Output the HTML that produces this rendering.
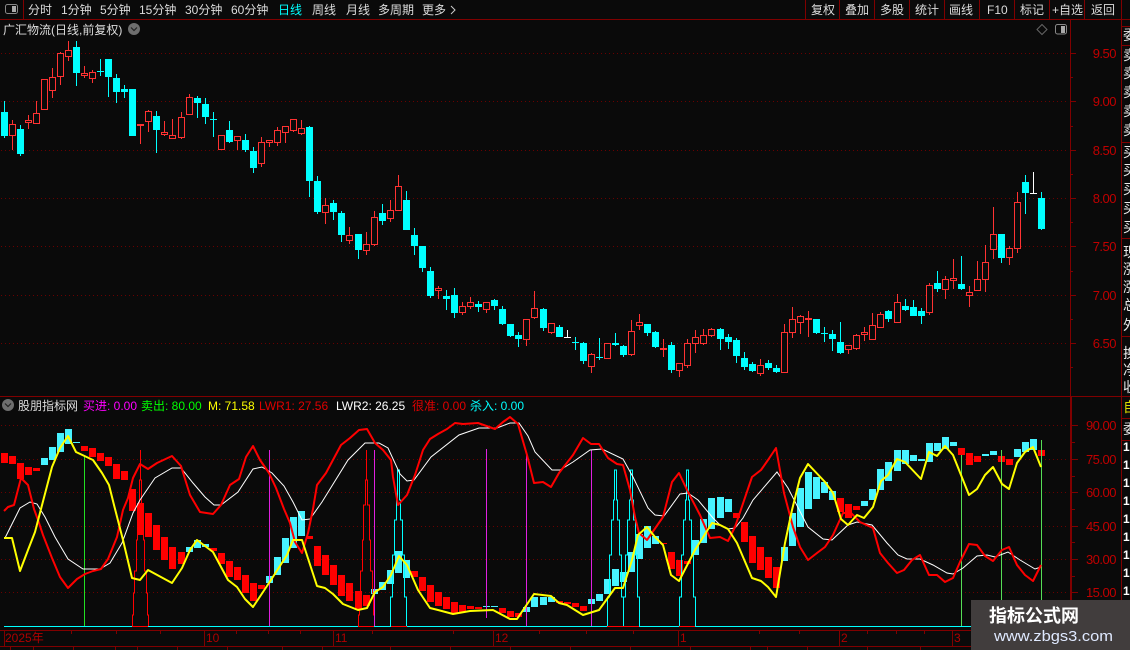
<!DOCTYPE html>
<html><head><meta charset="utf-8"><title>广汇物流</title>
<style>
html,body{margin:0;padding:0;width:1130px;height:650px;overflow:hidden;background:#0a0a0a}
svg{display:block;position:absolute;left:0;top:0}
text{font-family:"Liberation Sans","WenQuanYi Zen Hei","Noto Sans CJK SC",sans-serif;font-size:12px}
.ax text{font-size:13px;letter-spacing:-.5px}
.st text{font-size:14px}
</style></head><body>
<svg width="1130" height="650" viewBox="0 0 1130 650" xmlns="http://www.w3.org/2000/svg">
<defs>
<path id="sr" d="M-8 626V615H-7V593H-6V571H-4V540H-3V505H-1V480H0V450H0V480H1V505H3V540H4V571H6V593H7V615H8V626" fill="none" stroke="#f00" stroke-width="1" shape-rendering="crispEdges"/>
<path id="sc" d="M-8 626V597H-6V555H-4V520H-2V500H-1V470H1V500H2V520H4V555H6V597H8V626" fill="none" stroke="#00ffff" stroke-width="1" shape-rendering="crispEdges"/>
</defs>
<rect width="1130" height="650" fill="#0a0a0a"/>

<!-- frame lines -->
<g stroke="#800000" stroke-width="1" shape-rendering="crispEdges" fill="none">
<path d="M0 19.5H1130M23.5 0V19M805.5 0V19M839.5 0V19M874.5 0V19M909.5 0V19M944.5 0V19M979.5 0V19M1014.5 0V19M1049.5 0V19M1084.5 0V19M1121.5 0V650"/>
<path d="M1070.5 20V396"/>
<path d="M0 396.5H1130"/>
<path d="M1122 26.5H1130M1122 45.5H1130M1122 142.5H1130M1122 238.5H1130M1122 336.5H1130M1122 418.5H1130M1122 440.5H1130"/>
<path d="M1070 53.5h6M1070 101.5h6M1070 150.5h6M1070 198.5h6M1070 246.5h6M1070 295.5h6M1070 343.5h6M1070 77.5h3M1070 126.5h3M1070 174.5h3M1070 222.5h3M1070 271.5h3M1070 319.5h3M1070 367.5h3"/>
<path d="M1072 425.5h6M1072 459.5h6M1072 492.5h6M1072 526.5h6M1072 559.5h6M1072 592.5h6M1072 442.5h3M1072 476.5h3M1072 509.5h3M1072 542.5h3M1072 576.5h3M1072 609.5h3"/>
<path d="M1071 397V630" stroke-width="2"/>
<path d="M0 630.5H1130M0 646.5H1130"/>
<path d="M4.5 630V646M204.5 630V646M333.5 630V646M493.5 630V646M678.5 630V646M839.5 630V646M952.5 630V646"/>
<path d="M71.5 630v4M116.5 630v4M160.5 630v4M236.5 630v4M268.5 630v4M300.5 630v4M372.5 630v4M453.5 630v4M539.5 630v4M586.5 630v4M633.5 630v4M759.5 630v4M799.5 630v4M867.5 630v4M896.5 630v4M924.5 630v4"/>
<path d="M10.5 646v4M33.5 646v4M73.5 646v4M115.5 646v4M137.5 646v4M177.5 646v4M227.5 646v4M282.5 646v4M322.5 646v4M390.5 646v4M450.5 646v4M510.5 646v4M570.5 646v4M630.5 646v4M690.5 646v4M750.5 646v4M767.5 646v4M807.5 646v4M867.5 646v4M920.5 646v4"/>
</g>

<!-- grid -->
<g stroke="#6a0000" stroke-width="1" stroke-dasharray="1 3" shape-rendering="crispEdges">
<path d="M1 53.5H1068M1 101.5H1068M1 150.5H1068M1 198.5H1068M1 246.5H1068M1 295.5H1068M1 343.5H1068"/>
<path d="M1 425.5H1068M1 459.5H1068M1 492.5H1068M1 526.5H1068M1 559.5H1068M1 592.5H1068"/>
</g>

<!-- top left icon -->
<rect x="5.5" y="4.5" width="12" height="9" rx="2" fill="none" stroke="#888" stroke-width="1"/>
<rect x="12" y="6" width="4" height="6" fill="#aaa"/>
<!-- menu -->
<g fill="#dcdcdc">
<text x="28" y="14">分时</text><text x="61" y="14">1分钟</text><text x="100" y="14">5分钟</text><text x="139" y="14">15分钟</text><text x="185" y="14">30分钟</text><text x="231" y="14">60分钟</text>
<text x="278" y="14" fill="#00ffff">日线</text><text x="312" y="14">周线</text><text x="346" y="14">月线</text><text x="378" y="14">多周期</text><text x="422" y="14">更多</text>
<text x="811" y="14">复权</text><text x="845" y="14">叠加</text><text x="880" y="14">多股</text><text x="915" y="14">统计</text><text x="949" y="14">画线</text><text x="987" y="14">F10</text><text x="1020" y="14">标记</text><text x="1052" y="14">+自选</text><text x="1091" y="14">返回</text>
<text x="3" y="34">广汇物流(日线,前复权)</text>
</g>
<path d="M451 6l4 4-4 4" fill="none" stroke="#ccc" stroke-width="1"/>
<circle cx="134" cy="29" r="6" fill="#6e6e6e"/><path d="M131 27.5l3 3 3-3" fill="none" stroke="#222" stroke-width="1.2"/>
<path d="M1042 24.5l5 5-5 5-5-5z" fill="none" stroke="#666" stroke-width="1"/>
<rect x="1055.5" y="24.5" width="11" height="9.5" rx="2" fill="none" stroke="#888" stroke-width="1"/><rect x="1061" y="26" width="4" height="7" fill="#aaa"/>

<!-- price labels -->
<g class="ax" fill="#c00000" text-anchor="end">
<text x="1116" y="58">9.50</text><text x="1116" y="106">9.00</text><text x="1116" y="155">8.50</text><text x="1116" y="203">8.00</text><text x="1116" y="251">7.50</text><text x="1116" y="300">7.00</text><text x="1116" y="348">6.50</text>
<text x="1116" y="430">90.00</text><text x="1116" y="464">75.00</text><text x="1116" y="497">60.00</text><text x="1116" y="531">45.00</text><text x="1116" y="564">30.00</text><text x="1116" y="597">15.00</text>
</g>

<!-- candles -->
<g shape-rendering="crispEdges" fill="none">
<path stroke="#00ffff" stroke-width="1" d="M4.5 101V138M20.5 125V156M76.5 41V86M100.5 59V76M97 71.5h7M108.5 59V97M116.5 74V103M124.5 85V98M156.5 111V153M197.5 96V118M205.5 98V124M213.5 112V137M210 119.5h7M229.5 121V143M245.5 134V152M253.5 147V173M309.5 126V197M317.5 176V214M333.5 200V220M341.5 211V242M358.5 234V259M382.5 204V225M406.5 191V230M414.5 228V255M422.5 246V272M430.5 267V298M446.5 290V310M454.5 288V318M478.5 301V312M494.5 299V310M502.5 306V325M510.5 324V337M518.5 332V347M543.5 308V331M559.5 325V337M575.5 337V350M572 342.5h7M583.5 342V364M599.5 338V360M596 357.5h7M615.5 333V346M623.5 345V357M647.5 324V336M655.5 331V348M671.5 342V373M720.5 328V350M728.5 334V349M736.5 338V363M744.5 352V370M752.5 362V372M768.5 360V370M776.5 365V373M816.5 319V334M824.5 327V342M821 333.5h7M832.5 330V351M840.5 322V354M888.5 310V322M905.5 299V311M913.5 300V316M921.5 308V324M937.5 271V292M961.5 256V290M1001.5 234V263M1025.5 175V214M1041.5 192V230"/>
<path stroke="#00ffff" stroke-width="7" d="M4.5 112V136M20.5 129V154M76.5 47V73M108.5 59V77M116.5 78V92M124.5 89V92M132.5 89V136M156.5 116V130M197.5 98V103M205.5 104V117M229.5 130V142M245.5 140V150M253.5 151V168M309.5 127V181M317.5 181V212M333.5 203V212M341.5 213V235M358.5 234V250M382.5 213V221M406.5 200V230M414.5 235V246M422.5 246V268M430.5 271V296M446.5 296V299M454.5 295V313M478.5 304V307M494.5 300V306M502.5 309V324M510.5 324V336M518.5 335V339M543.5 309V328M559.5 327V337M583.5 343V361M615.5 343V345M623.5 346V355M647.5 324V333M655.5 332V347M671.5 345V370M720.5 329V339M728.5 337V342M736.5 340V356M744.5 358V367M752.5 364V371M768.5 363V368M776.5 368V372M816.5 319V333M832.5 334V339M840.5 342V353M888.5 311V319M905.5 306V310M913.5 307V316M921.5 311V316M937.5 283V289M961.5 284V289M1001.5 234V258M1025.5 182V193M1041.5 198V229"/>
<path stroke="#ff3232" stroke-width="1" d="M12.5 120V150M28.5 115V129M36.5 101V123M44.5 79V109M52.5 68V98M60.5 52V85M68.5 41V61M84.5 66V78M92.5 70V83M140.5 124V144M148.5 110V132M164.5 121V136M172.5 119V139M181.5 112V139M189.5 94V115M237.5 136V150M261.5 137V167M269.5 140V147M277.5 127V146M285.5 126V143M293.5 119V132M301.5 120V135M325.5 198V224M349.5 227V244M366.5 232V255M374.5 211V246M390.5 200V222M398.5 175V211M438.5 286V299M462.5 302V315M470.5 297V309M486.5 302V313M526.5 319V346M534.5 291V319M551.5 323V334M591.5 353V373M631.5 320V356M639.5 314V330M663.5 339V357M679.5 363V377M687.5 339V368M695.5 330V353M703.5 329V345M711.5 328V337M760.5 359V376M784.5 324V373M792.5 307V338M800.5 315V334M808.5 311V337M848.5 345V354M856.5 334V350M864.5 327V341M872.5 313V340M880.5 312V328M897.5 294V323M929.5 283V315M945.5 276V299M953.5 259V289M969.5 286V307M977.5 261V291M985.5 245V292M993.5 207V259M1009.5 246V265M1017.5 192V253"/>
<path stroke="#ff3232" stroke-width="2" d="M137 125h7M660 349h7M805 319h7"/>
<path stroke="#ff3232" stroke-width="1" fill="#0a0a0a" d="M9.5 124.5h6v11h-6zM25.5 120.5h6v2h-6zM33.5 113.5h6v10h-6zM41.5 79.5h6v30h-6zM49.5 77.5h6v13h-6zM57.5 53.5h6v23h-6zM65.5 50.5h6v6h-6zM81.5 73.5h6v2h-6zM89.5 72.5h6v6h-6zM145.5 111.5h6v10h-6zM161.5 132.5h6v2h-6zM169.5 135.5h6v3h-6zM178.5 117.5h6v20h-6zM186.5 97.5h6v17h-6zM218.5 135.5h6v14h-6zM234.5 136.5h6v4h-6zM258.5 142.5h6v21h-6zM266.5 140.5h6v2h-6zM274.5 130.5h6v12h-6zM282.5 126.5h6v6h-6zM290.5 119.5h6v11h-6zM298.5 128.5h6v5h-6zM322.5 205.5h6v7h-6zM346.5 235.5h6v5h-6zM363.5 244.5h6v6h-6zM371.5 217.5h6v27h-6zM387.5 210.5h6v8h-6zM395.5 186.5h6v24h-6zM435.5 288.5h6v2h-6zM459.5 306.5h6v6h-6zM467.5 302.5h6v4h-6zM483.5 302.5h6v7h-6zM523.5 319.5h6v20h-6zM531.5 308.5h6v9h-6zM548.5 323.5h6v9h-6zM588.5 354.5h6v12h-6zM604.5 343.5h6v15h-6zM628.5 331.5h6v23h-6zM636.5 322.5h6v3h-6zM676.5 363.5h6v7h-6zM684.5 343.5h6v22h-6zM692.5 337.5h6v6h-6zM700.5 335.5h6v8h-6zM708.5 329.5h6v6h-6zM757.5 365.5h6v8h-6zM781.5 332.5h6v40h-6zM789.5 319.5h6v13h-6zM797.5 316.5h6v6h-6zM845.5 345.5h6v4h-6zM853.5 335.5h6v13h-6zM861.5 332.5h6v2h-6zM869.5 325.5h6v14h-6zM877.5 314.5h6v13h-6zM894.5 302.5h6v20h-6zM926.5 285.5h6v27h-6zM942.5 279.5h6v10h-6zM950.5 278.5h6v2h-6zM966.5 292.5h6v3h-6zM974.5 279.5h6v11h-6zM982.5 262.5h6v17h-6zM990.5 234.5h6v15h-6zM1006.5 248.5h6v9h-6zM1014.5 202.5h6v46h-6z"/>
<path stroke="#ffffff" stroke-width="1" d="M567.5 330V338M564 337.5h7M1033.5 172V193M1030 193.5h7"/>
</g>

<!-- lower panel legend -->
<circle cx="8" cy="405" r="6" fill="#6e6e6e"/><path d="M5 403.5l3 3 3-3" fill="none" stroke="#222" stroke-width="1.2"/>
<text x="18" y="410" fill="#dcdcdc">股朋指标网</text>
<text x="83" y="410" fill="#ff00ff">买进: 0.00</text>
<text x="141" y="410" fill="#00ff00">卖出: 80.00</text>
<text x="208" y="410" fill="#ffff00">M: 71.58</text>
<text x="259" y="410" fill="#e00000">LWR1: 27.56</text>
<text x="336" y="410" fill="#ffffff">LWR2: 26.25</text>
<text x="412" y="410" fill="#e00000">很准: 0.00</text>
<text x="470" y="410" fill="#00ffff">杀入: 0.00</text>

<!-- bars -->
<g fill="none" stroke-width="7" shape-rendering="crispEdges">
<path stroke="#ff0000" d="M4.5 453V463M12.5 456V464M20.5 463V479M28.5 467V475M36.5 468V471M84.5 446V451M92.5 448V457M100.5 453V461M108.5 457V466M116.5 464V479M124.5 471V480M132.5 489V511M140.5 503V535M148.5 513V537M156.5 525V550M164.5 537V560M172.5 547V569M181.5 552V564M213.5 548V551M221.5 553V564M229.5 561V577M237.5 567V580M245.5 575V593M253.5 583V601M261.5 585V589M309.5 536V539M317.5 546V566M325.5 555V575M333.5 565V585M341.5 575V596M349.5 583V601M358.5 591V610M366.5 595V606M414.5 571V577M422.5 577V591M430.5 585V602M438.5 592V606M446.5 597V609M454.5 602V613M462.5 605V612M470.5 606V609M478.5 607V609M502.5 608V613M510.5 611V617M518.5 613V617M559.5 601V603M567.5 602V604M575.5 603V607M583.5 606V611M663.5 543V544M671.5 552V569M679.5 560V576M687.5 561V564M736.5 513V518M744.5 522V542M752.5 536V563M760.5 547V570M768.5 557V578M776.5 567V588M840.5 498V512M848.5 504V518M856.5 506V510M961.5 448V455M969.5 453V465M977.5 456V462M1001.5 456V462M1009.5 459V465M1041.5 450V456"/>
<path stroke="#48f2ff" d="M44.5 458V465M52.5 447V460M60.5 433V452M68.5 429V444M189.5 547V552M197.5 540V548M205.5 544V547M269.5 576V583M277.5 557V575M285.5 538V563M293.5 517V548M301.5 511V536M374.5 589V594M382.5 582V590M390.5 570V584M398.5 551V573M406.5 560V578M526.5 607V612M534.5 597V607M543.5 597V605M551.5 597V602M591.5 599V604M599.5 594V601M607.5 579V594M615.5 569V586M623.5 572V582M631.5 552V572M639.5 534V559M647.5 526V548M655.5 536V544M695.5 540V555M703.5 519V543M711.5 498V529M720.5 497V518M728.5 499V512M784.5 547V561M792.5 513V546M800.5 488V527M808.5 472V509M816.5 477V499M824.5 482V493M832.5 491V500M864.5 501V506M872.5 489V500M880.5 469V490M888.5 462V481M897.5 450V471M905.5 450V464M913.5 455V461M921.5 459V461M929.5 443V462M937.5 443V451M945.5 437V449M953.5 442V446M985.5 454V456M993.5 451V455M1017.5 449V457M1025.5 442V452M1033.5 439V450"/>
</g>
<path d="M73 442.5h7M483 606.5h7M491 606.5h7" stroke="#48f2ff" stroke-width="1" shape-rendering="crispEdges"/>

<!-- base line -->
<g shape-rendering="crispEdges" stroke-width="1" fill="none">
<path stroke="#00ffff" d="M4 626.5H132M148 626.5H358M374 626.5H391M407 626.5H607M639 626.5H679M695 626.5H1130"/>
<path stroke="#ff0000" d="M132 626.5H148M358 626.5H374M391 626.5H407M607 626.5H639M679 626.5H695"/>
</g>

<!-- spikes -->
<use href="#sr" transform="translate(140.5,0)"/>
<use href="#sr" transform="translate(366.5,0)"/>
<use href="#sc" transform="translate(398.5,0)"/>
<use href="#sc" transform="translate(615.5,0)"/>
<use href="#sc" transform="translate(631.5,0)"/>
<use href="#sc" transform="translate(687.5,0)"/>

<!-- vertical signals -->
<g shape-rendering="crispEdges" stroke-width="1" fill="none">
<path stroke="#22e022" d="M84.5 456V626"/>
<path stroke="#e020e0" d="M269.5 450V626M374.5 450V626M486.5 449V618M526.5 455V626M591.5 450V626"/>
<path stroke="#55dd55" d="M961.5 455V626M1001.5 450V626M1041.5 440V626"/>
</g>

<!-- white line -->
<path fill="none" stroke="#ffffff" stroke-width="1" d="M5 538L10 528L20 508L30 502L37 504L45 517L55 537L68 559L83 569L100 569L110 563L122 543L133 513L140 500L155 478L172 468L181 468L193 483L205 497L214 505L221 505L238 492L253 469L262 467L272 473L284 486L293 502L302 520L310 519L322 502L348 460L365 443L379 443L388 448L400 474L407 481L414 480L431 457L459 435L479 428L497 428L510 423L519 423L528 436L535 452L552 470L560 470L573 462L590 450L602 449L623 459L633 477L648 508L655 515L664 516L680 494L688 493L698 500L713 518L720 525L728 529L735 528L743 518L753 500L777 472L788 488L808 527L823 539L832 540L848 525L857 522L872 525L887 543L898 555L907 559L920 559L933 565L947 573L953 574L963 568L977 556L987 555L995 557L1008 552L1020 560L1035 569L1041 567"/>
<!-- red line -->
<path fill="none" stroke="#ff0000" stroke-width="2" stroke-linejoin="round" d="M4 511L8 507L14 505L21 478L28 485L34 509L38 520L43 535L52 558L60 577L68 588L77 579L85 574L93 571L101 569L108 559L117 537L123 510L128 498L133 478L140 464L148 469L157 463L172 456L181 466L190 495L200 512L213 514L221 505L230 485L239 479L246 457L253 446L260 460L269 473L276 488L284 509L290 523L295 542L302 553L308 533L313 509L317 485L326 473L341 445L350 438L359 430L367 429L375 443L383 450L391 460L393 477L398 505L407 495L415 475L423 450L430 439L438 434L447 429L455 423L463 424L478 423L495 429L503 422L510 417L518 424L527 455L534 483L543 482L551 487L559 473L573 455L583 438L591 444L599 444L608 458L617 464L623 465L630 490L635 517L639 533L647 540L663 517L672 482L679 473L688 492L700 515L710 538L720 537L728 541L735 527L752 477L761 470L768 460L776 448L784 493L793 527L800 547L808 560L817 553L825 547L833 535L843 513L851 513L860 522L873 528L880 553L888 563L897 573L904 570L912 560L920 555L929 575L937 575L945 582L953 578L960 562L969 544L977 545L985 556L993 561L1002 550L1009 547L1017 565L1025 575L1033 581L1041 565"/>
<!-- yellow line -->
<path fill="none" stroke="#ffff00" stroke-width="2" stroke-linejoin="round" d="M4 538L12 538L20 571L28 550L35 532L41 509L52 467L60 448L68 436L76 452L93 460L102 473L109 485L114 505L123 540L132 578L140 580L148 570L172 583L182 568L190 550L197 540L213 552L228 580L237 587L245 599L253 607L269 583L287 555L293 540L302 540L317 586L325 588L333 594L343 604L358 610L367 608L375 592L383 587L391 575L399 556L407 565L418 590L430 608L438 610L453 614L470 611L493 610L510 619L517 619L534 594L551 596L559 603L567 605L583 615L599 610L615 588L623 588L632 560L638 535L647 527L655 537L663 545L671 575L679 581L695 550L712 523L720 525L728 529L737 543L752 578L761 581L768 587L776 597L785 543L792 510L800 478L808 464L825 482L833 493L841 519L848 525L857 515L864 518L873 507L881 481L888 475L897 459L905 462L921 479L929 452L937 456L945 446L953 455L969 495L977 489L985 475L993 467L1002 484L1009 489L1017 463L1025 452L1033 447L1041 467"/>

<!-- x labels -->
<g fill="#b00000">
<text x="5" y="642">2025年</text><text x="206" y="642">10</text><text x="335" y="642">11</text><text x="495" y="642">12</text><text x="680" y="642">1</text><text x="841" y="642">2</text><text x="954" y="642">3</text>
</g>

<!-- right strip -->
<g class="st" fill="#e8e8e8">
<text x="1123" y="40">委</text>
<text x="1123" y="60">卖</text><text x="1123" y="78">卖</text><text x="1123" y="97">卖</text><text x="1123" y="116">卖</text><text x="1123" y="135">卖</text>
<text x="1123" y="157">买</text><text x="1123" y="175">买</text><text x="1123" y="194">买</text><text x="1123" y="213">买</text><text x="1123" y="232">买</text>
<text x="1123" y="257">现</text><text x="1123" y="274">涨</text><text x="1123" y="292">涨</text><text x="1123" y="310">总</text><text x="1123" y="330">外</text>
<text x="1123" y="358">换</text><text x="1123" y="375">净</text><text x="1123" y="392">收</text>
<text x="1123" y="412" fill="#d8d800">自</text>
<text x="1123" y="434">委</text>
</g>
<g fill="#ffffff" font-weight="bold">
<text x="1123" y="451">1</text><text x="1123" y="469">1</text><text x="1123" y="487">1</text><text x="1123" y="505">1</text><text x="1123" y="523">1</text><text x="1123" y="541">1</text><text x="1123" y="559">1</text><text x="1123" y="577">1</text><text x="1123" y="595">1</text>
</g>

<!-- watermark -->
<rect x="971" y="600" width="159" height="50" fill="#413d3d"/>
<text x="1034" y="622" text-anchor="middle" fill="#ffffff" font-weight="bold" style="font-family:'Noto Sans CJK SC','WenQuanYi Zen Hei',sans-serif;font-size:18px">指标公式网</text>
<text x="994" y="641" fill="#dfe9ff" style="font-size:15px" textLength="119" lengthAdjust="spacingAndGlyphs">www.zbgs3.com</text>
</svg>
</body></html>
